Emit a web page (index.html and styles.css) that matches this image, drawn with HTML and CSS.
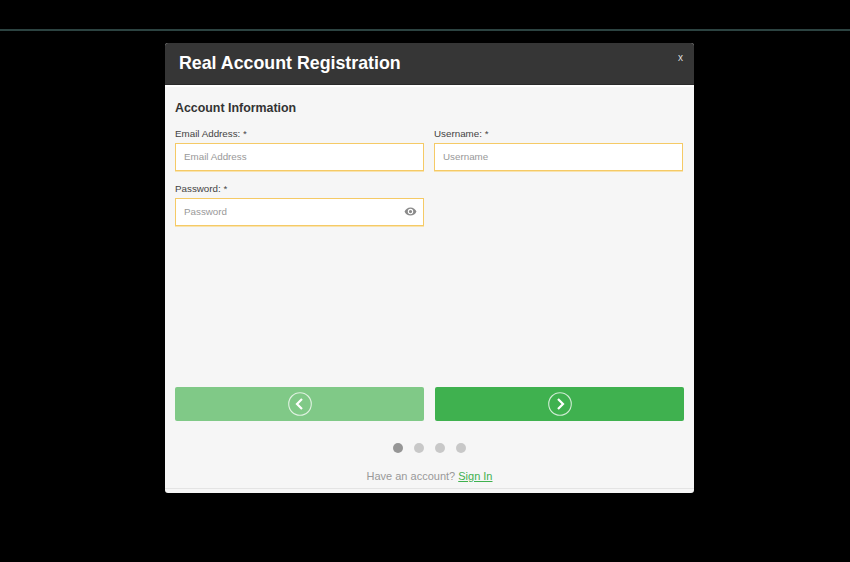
FILE: index.html
```html
<!DOCTYPE html>
<html lang="en">
  <head>
    <meta charset="UTF-8" />
    <meta name="viewport" content="width=device-width, initial-scale=1.0" />
    <title>Real Account Registration</title>
    <link rel="stylesheet" href="styles.css">
  </head>
  <body>
    <div class="top-line"></div>

    <div class="modal">
      <div class="modal-header">
        <h1>Real Account Registration</h1>
        <span class="close">x</span>
      </div>

      <div class="modal-body">
        <h2>Account Information</h2>

        <div class="fields">
          <div class="field">
            <label>Email Address: *</label>
            <div class="input-box"><span>Email Address</span></div>
          </div>
          <div class="field">
            <label>Username: *</label>
            <div class="input-box"><span>Username</span></div>
          </div>
          <div class="field">
            <label>Password: *</label>
            <div class="input-box">
              <span>Password</span>
              <svg class="eye" viewBox="0 0 24 24" width="13" height="13">
                <path fill="#8a8a8a" d="M12 4.5C7 4.5 2.7 7.6 1 12c1.7 4.4 6 7.500 11 7.500s9.300-3.100 11-7.500c-1.700-4.400-6-7.500-11-7.500zM12 17a5 5 0 1 1 0-10 5 5 0 0 1 0 10zm0-8a3 3 0 1 0 0 6 3 3 0 0 0 0-6z"/>
              </svg>
            </div>
          </div>
        </div>

        <div class="buttons">
          <button class="step-btn prev">
            <svg viewBox="0 0 24 24" width="24" height="24">
              <circle cx="12" cy="12" r="11.300" fill="none" stroke="#fff" stroke-opacity="0.75" stroke-width="1.100"/>
              <path d="M14 7l-5 5 5 5" fill="none" stroke="#fff" stroke-width="2.200"/>
            </svg>
          </button>
          <button class="step-btn next">
            <svg viewBox="0 0 24 24" width="24" height="24">
              <circle cx="12" cy="12" r="11.300" fill="none" stroke="#fff" stroke-opacity="0.75" stroke-width="1.100"/>
              <path d="M10 7l5 5-5 5" fill="none" stroke="#fff" stroke-width="2.200"/>
            </svg>
          </button>
        </div>

        <div class="dots">
          <span class="dot active"></span>
          <span class="dot"></span>
          <span class="dot"></span>
          <span class="dot"></span>
        </div>

        <p class="signin">Have an account? <a href="#">Sign In</a></p>
      </div>
    </div>
  </body>
</html>
```

FILE: styles.css
```css
*,
*::before,
*::after {
  box-sizing: border-box;
}
:root {
  --green: #3fb14f;
  --input-border: #f5ca66;
}
body {
  margin: 0;
  background: #000;
  height: 562px;
  overflow: hidden;
  font-family: "Liberation Sans", Arial, sans-serif;
}

.top-line {
  height: 2px;
  margin-top: 29px;
  background: #2c4341;
}

.modal {
  width: 529px;
  height: 450px;
  margin: 12px 0 0 165px;
  background: #f6f6f6;
  border-radius: 3px;
  overflow: hidden;
}

.modal-header {
  height: 42px;
  padding: 0 11px 0 14px;
  background: #363636;
  border-bottom: 1px solid #2a2a2a;
  display: flex;
  justify-content: space-between;
  color: #fff;
}
.modal-header h1 {
  margin: 0;
  font-size: 17.800px;
  line-height: 40px;
}
.close {
  font-size: 10px;
  line-height: 29px;
  color: #ddd;
}

.modal-body {
  height: 404px;
  border-top: 2px solid #fff;
  border-bottom: 1px solid #e4e4e4;
  padding: 0 10px;
}
.modal-body h2 {
  margin: 0;
  padding-top: 14px;
  font-size: 12.400px;
  line-height: 15px;
  color: #333;
}

.fields {
  display: grid;
  grid-template-columns: 249px 249px;
  column-gap: 10px;
  row-gap: 11px;
  margin-top: 11px;
  height: 260px;
  align-content: start;
}
.field label {
  display: block;
  font-size: 9.800px;
  line-height: 14px;
  color: #444;
  margin-bottom: 2px;
}
.input-box {
  height: 28px;
  padding: 0 6px 2px 8px;
  background: #fff;
  border: 1px solid var(--input-border);
  box-shadow: 0 1px 0 #f9e3ae;
  display: flex;
  align-items: center;
  justify-content: space-between;
  font-size: 9.800px;
  color: #999;
}

.buttons {
  display: flex;
  gap: 11px;
}
.step-btn {
  width: 249px;
  height: 34px;
  padding: 0;
  border: 0;
  border-radius: 2px;
  display: flex;
  align-items: center;
  justify-content: center;
}
.step-btn.prev {
  background: #80c987;
}
.step-btn.next {
  background: var(--green);
}

.dots {
  display: flex;
  justify-content: center;
  gap: 11px;
  margin-top: 22px;
}
.dot {
  width: 10px;
  height: 10px;
  border-radius: 50%;
  background: #c8c8c8;
}
.dot.active {
  background: #969696;
}

.signin {
  margin: 16px 0 0;
  text-align: center;
  font-size: 11px;
  line-height: 14px;
  color: #999;
}
.signin a {
  color: var(--green);
}
```
